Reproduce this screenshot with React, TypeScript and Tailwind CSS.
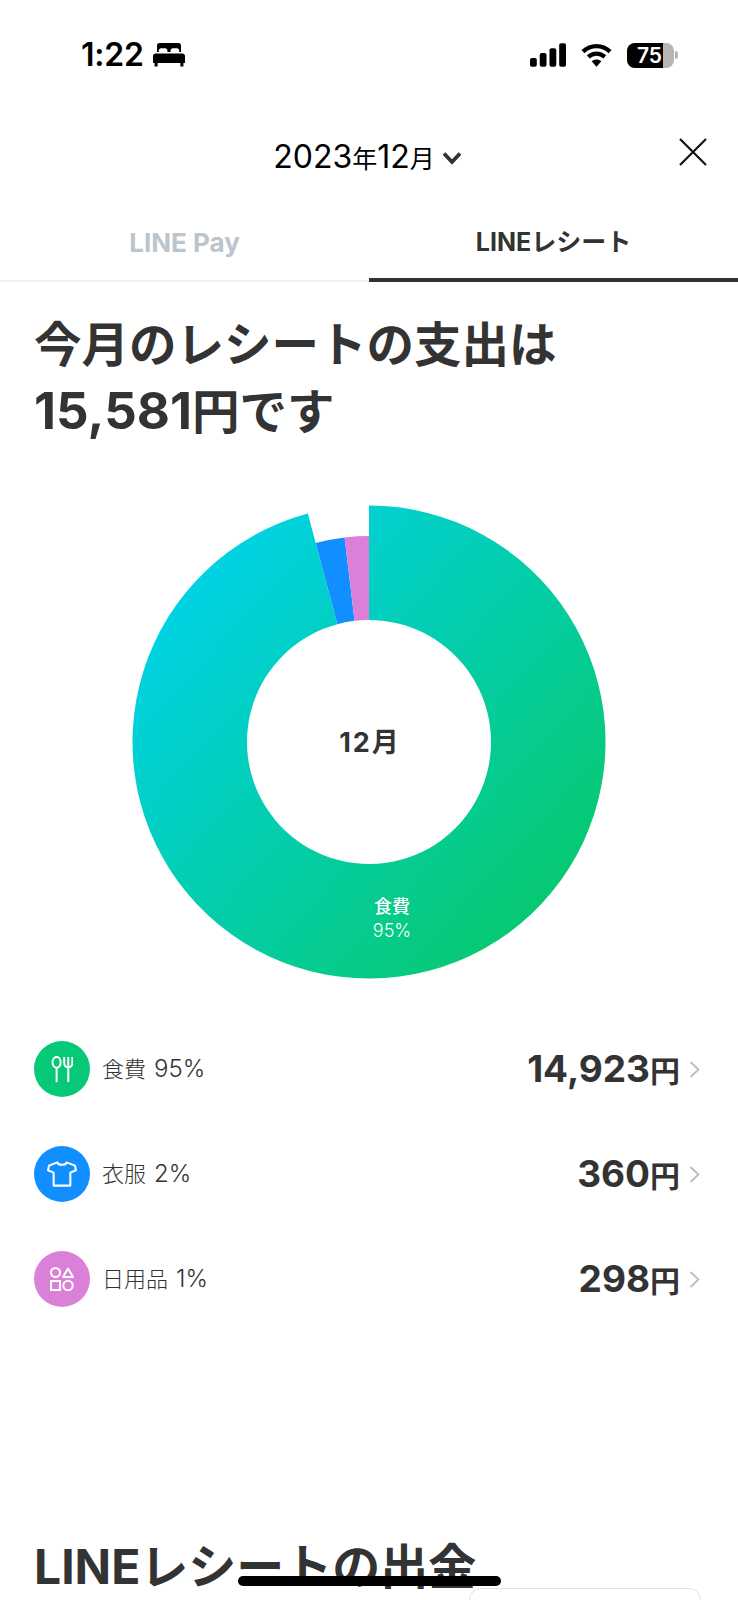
const arc = (a0: number, a1: number, R: number, r: number) => {
  const pt = (a: number, d: number) => {
    const t = (a * Math.PI) / 180;
    return `${(237 + d * Math.sin(t)).toFixed(2)} ${(237 - d * Math.cos(t)).toFixed(2)}`;
  };
  const large = a1 - a0 > 180 ? 1 : 0;
  return `M${pt(a0, R)} A${R} ${R} 0 ${large} 1 ${pt(a1, R)} L${pt(a1, r)} A${r} ${r} 0 ${large} 0 ${pt(a0, r)} Z`;
};

const StatusBar = () => (
  <div className="flex h-[110px] items-center justify-between pl-[81px] pr-[60px] text-black">
    <div className="flex items-center gap-[9px]">
      <span className="text-[32px] leading-none font-semibold tracking-[-0.2px]">1:22</span>
      <svg viewBox="0 0 32 24" className="w-[32px] h-[24px]" fill="currentColor">
        <path d="M4 2.500C4 1 5 0 6.500 0h19C27 0 28 1 28 2.500V9h-1.800V7.600c0-1.400-.9-2.300-2.300-2.300h-4c-1.400 0-2.300.9-2.300 2.300V9h-3.200V7.600c0-1.400-.9-2.300-2.300-2.300h-4c-1.400 0-2.300.9-2.300 2.300V9H4z" />
        <path d="M2.600 10.500h26.800c1.500 0 2.600 1.200 2.600 2.600V20h-1.600v3.600h-3V20H4.600v3.600h-3V20H0v-6.900c0-1.400 1.100-2.600 2.600-2.600z" />
      </svg>
    </div>
    <div className="flex items-center gap-[15px]">
      <svg viewBox="0 0 37 24" className="w-[36px] h-[24px]" fill="currentColor">
        <rect x="0" y="15" width="7" height="9" rx="2" />
        <rect x="10" y="10" width="7" height="14" rx="2" />
        <rect x="20" y="5" width="7" height="19" rx="2" />
        <rect x="30" y="0" width="7" height="24" rx="2" />
      </svg>
      <svg viewBox="0 0 32 24" className="w-[31px] h-[24px]" fill="none" stroke="currentColor" strokeWidth="4.400">
        <path d="M2 8.500C10 1 22 1 30 8.500" />
        <path d="M7.500 14C12.500 9.500 19.500 9.500 24.500 14" />
        <path d="M16 24l-5-5.500c3-2.400 7-2.400 10 0z" fill="currentColor" stroke="none" />
      </svg>
      <div className="flex items-center">
        <div className="flex h-[25px] w-[47px] overflow-hidden rounded-[8px] bg-[#b5b5b5]">
          <div className="flex w-[36px] items-center justify-end bg-black pr-[1px] text-[21px] leading-none font-semibold text-white">75</div>
        </div>
        <div className="ml-[1px] h-[8px] w-[3px] rounded-r-full bg-[#b5b5b5]" />
      </div>
    </div>
  </div>
);

const rows = [
  { name: "食費", pct: "95%", amount: "14,923", color: "bg-[#06c977]", icon: "food" },
  { name: "衣服", pct: "2%", amount: "360", color: "bg-[#118eff]", icon: "shirt" },
  { name: "日用品", pct: "1%", amount: "298", color: "bg-[#db80d8]", icon: "goods" },
];

const RowIcon = ({ name }: { name: string }) => {
  if (name === "food") {
    return (
      <svg viewBox="0 0 24 30" className="w-[22px] h-[27px]" fill="none" stroke="white" strokeWidth="2.200">
        <ellipse cx="6" cy="7" rx="4.500" ry="6" />
        <path d="M6 13v16" />
        <path d="M14.500 1v6.500c0 3 1.500 5 4.500 5s4.500-2 4.500-5V1M19 1v28" />
      </svg>
    );
  }
  if (name === "shirt") {
    return (
      <svg viewBox="0 0 32 28" className="w-[30px] h-[26px]" fill="none" stroke="white" strokeWidth="2.200" strokeLinejoin="round">
        <path d="M11 1.500 L2 5 L1 10 L7 12.500 L7 26.500 L25 26.500 L25 12.500 L31 10 L30 5 L21 1.500 C20 5 12 5 11 1.500 Z" />
      </svg>
    );
  }
  return (
    <svg viewBox="0 0 24 24" className="w-[24px] h-[24px]" fill="none" stroke="white" strokeWidth="2">
      <circle cx="5.500" cy="5.500" r="4.500" />
      <path d="M18 1.500 L23 10 L13 10 Z" strokeLinejoin="round" />
      <rect x="1" y="14" width="9" height="9" />
      <circle cx="18" cy="18.500" r="4.700" />
    </svg>
  );
};

export default function App() {
  return (
    <div className="relative h-[1600px] w-[738px] overflow-hidden bg-white font-['Inter','Noto_Sans_CJK_JP',sans-serif] text-[#333333]">
      <StatusBar />

      <div className="relative flex h-[94px] items-center justify-center pr-[3px] text-black">
        <span className="text-[32px] leading-none">2023<span className="text-[25px]">年</span>12<span className="text-[25px]">月</span></span>
        <svg viewBox="0 0 20 14" className="ml-[7px] mt-[2px] w-[20px] h-[14px]" fill="none" stroke="#333333" strokeWidth="3.800">
          <path d="M2 2.500l8 8.500 8-8.500" />
        </svg>
        <svg viewBox="0 0 28 28" className="absolute right-[31px] top-[28px] w-[28px] h-[28px]" fill="none" stroke="#111111" strokeWidth="2.200">
          <path d="M1 1l26 26M27 1L1 27" />
        </svg>
      </div>

      <div className="flex h-[78px] font-bold">
        <div className="flex w-[369px] items-center justify-center border-b-2 border-[#eeeff1] text-[26px] text-[#bcc4cc]">LINE Pay</div>
        <div className="flex w-[369px] items-center justify-center border-b-4 border-[#333333] pt-[3px] text-[25px] text-[#333333]">LINEレシート</div>
      </div>

      <h1 className="mt-[29px] pl-[34px] text-[47.500px] leading-[67px] font-bold">
        今月のレシートの支出は
        <br />
        <span className="text-[51px] leading-none">15,581</span>円です
      </h1>

      <div className="mt-[60px] flex justify-center">
        <svg viewBox="0 0 474 474" className="w-[474px] h-[474px]">
          <defs>
            <linearGradient id="ring" gradientUnits="userSpaceOnUse" x1="60" y1="90" x2="400" y2="400">
              <stop offset="0" stopColor="#00d2e2" />
              <stop offset="1" stopColor="#07c973" />
            </linearGradient>
          </defs>
          <path d={arc(0, 345, 236.5, 122)} fill="url(#ring)" />
          <path d={arc(345, 353.2, 206, 122)} fill="#118eff" />
          <path d={arc(353.2, 360, 206, 122)} fill="#db80d8" />
          <text x="238" y="247" textAnchor="middle" fontSize="27" fontWeight="700" fill="#333333" letterSpacing="2">12月</text>
          <text x="260" y="408" textAnchor="middle" fontSize="18" fontWeight="500" fill="white">食費</text>
          <text x="260" y="432" textAnchor="middle" fontSize="18" fontWeight="300" fill="white">95%</text>
        </svg>
      </div>

      <div className="mt-[62px] flex flex-col gap-[49px] pl-[34px] pr-[38px]">
        {rows.map((row) => (
          <div key={row.name} className="flex h-[56px] items-center">
            <div className={`flex h-[56px] w-[56px] items-center justify-center rounded-full ${row.color}`}>
              <RowIcon name={row.icon} />
            </div>
            <span className="ml-[12px] text-[22px] font-light text-[#333333]">{row.name}</span>
            <span className="ml-[8px] text-[24px] font-light text-[#333333]">{row.pct}</span>
            <span className="ml-auto pb-[2px] text-[37px] leading-none font-bold">
              {row.amount}
              <span className="text-[30px]">円</span>
            </span>
            <svg viewBox="0 0 11 17" className="ml-[9px] w-[11px] h-[17px]" fill="none" stroke="#b9bdc2" strokeWidth="1.800">
              <path d="M1.500 1l8 7.500-8 7.500" />
            </svg>
          </div>
        ))}
      </div>

      <h2 className="mt-[228px] pl-[34px] text-[48px] leading-[64px] font-bold">LINEレシートの出金</h2>

      <div className="absolute left-[469px] top-[1588px] h-[40px] w-[232px] rounded-[12px] border border-[#e3e3e3] bg-white" />
      <div className="absolute left-[238px] top-[1576px] h-[10px] w-[263px] rounded-full bg-black" />
    </div>
  );
}
